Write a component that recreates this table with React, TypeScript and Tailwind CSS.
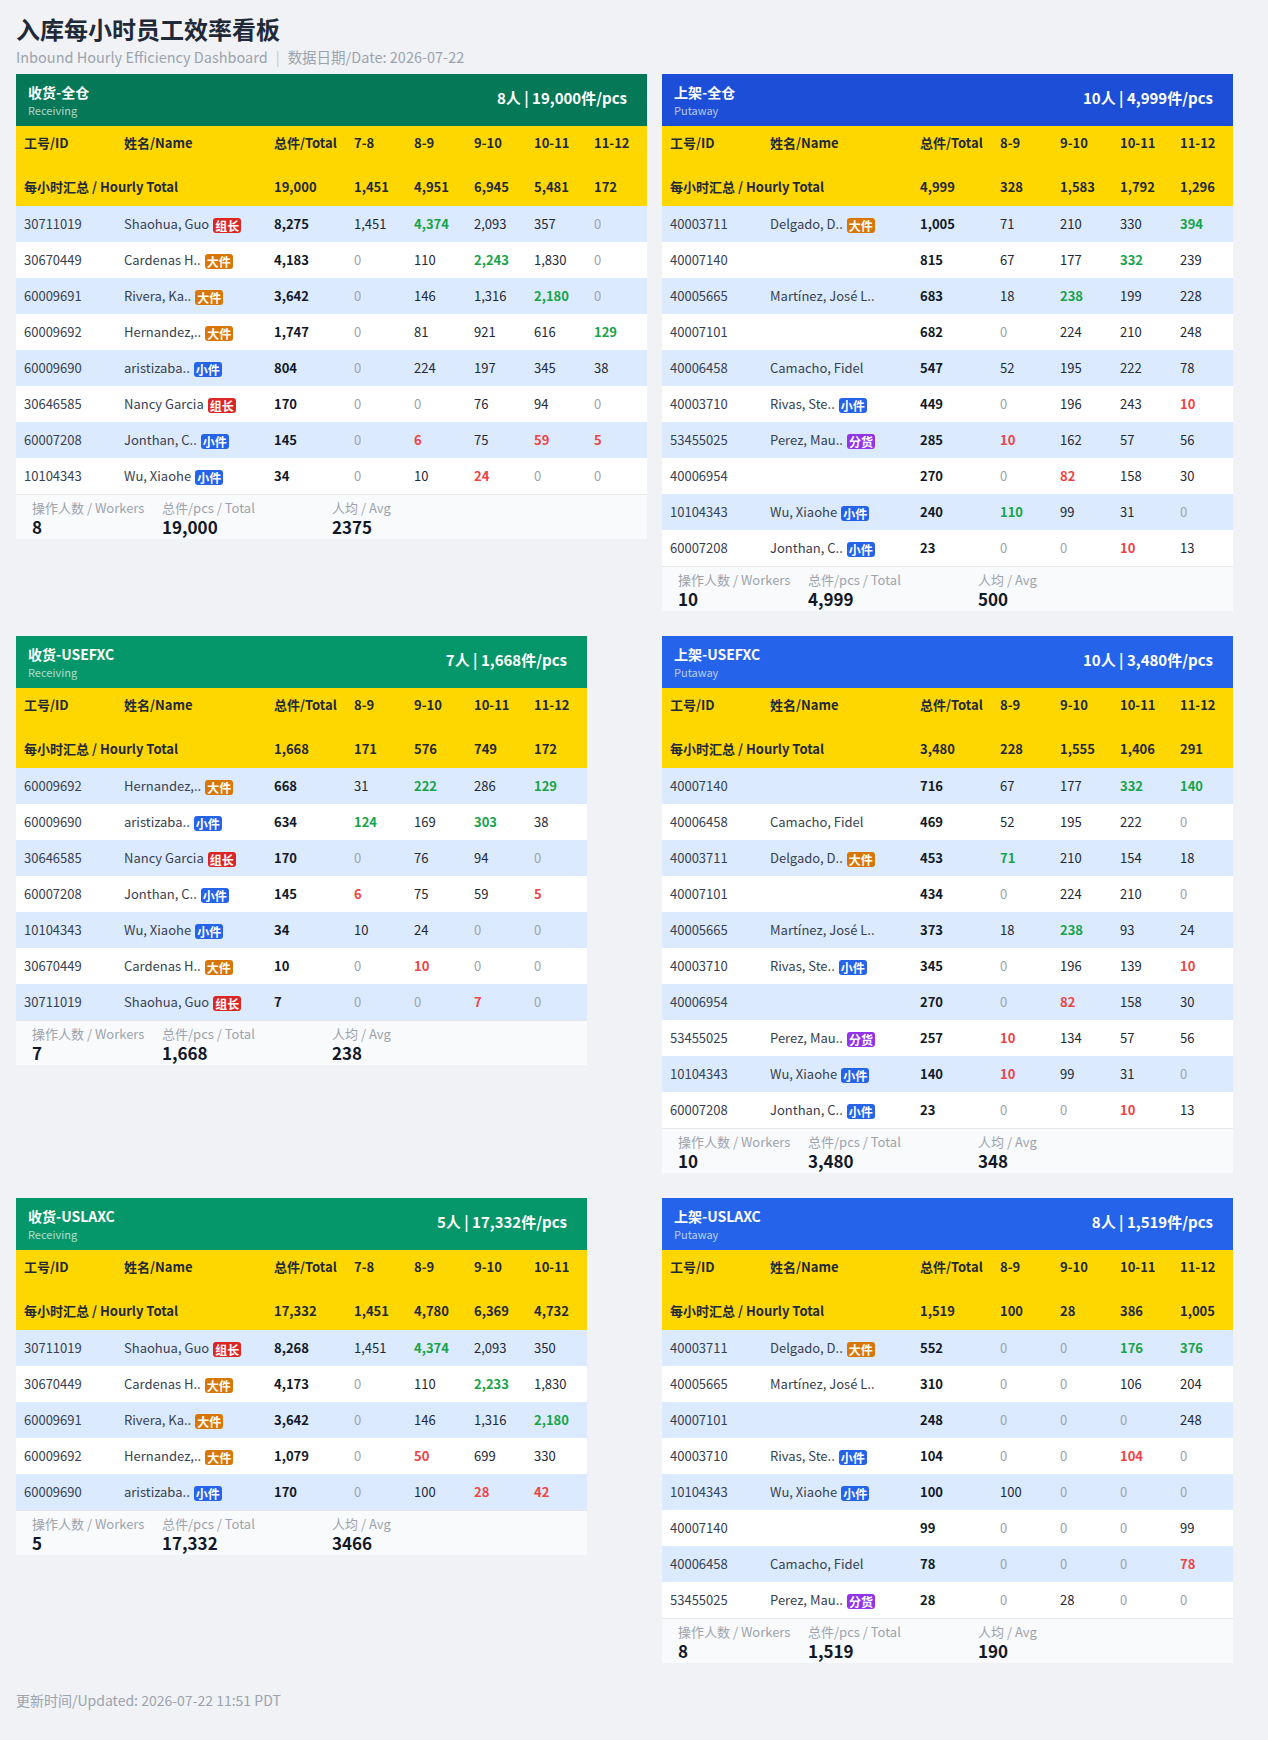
import React from "react";

type Badge = "组长" | "大件" | "小件" | "分货";

interface Row {
  id: string;
  name?: string;
  badge?: Badge;
  total: string;
  hours: string[];
}

interface Panel {
  title: string;
  sub: string;
  headerBg: string;
  summary: string;
  hours: string[];
  totals: string[];
  rows: Row[];
  workers: string;
  total: string;
  avg: string;
}

// hours written as one space-separated string; "g:" = best hour (green), "r:" = low hour (red)
const r = (id: string, name: string, badge: Badge | "", total: string, hours: string): Row => ({
  id,
  name: name || undefined,
  badge: badge || undefined,
  total,
  hours: hours.split(" "),
});

const badgeClass: Record<Badge, string> = {
  组长: "bg-[#dc2626]",
  大件: "bg-[#d97706]",
  小件: "bg-[#2563eb]",
  分货: "bg-[#9333ea]",
};

const panels: Panel[] = [
  {
    title: "收货-全仓",
    sub: "Receiving",
    headerBg: "bg-[#047857]",
    summary: "8人 | 19,000件/pcs",
    hours: ["7-8", "8-9", "9-10", "10-11", "11-12"],
    totals: ["19,000", "1,451", "4,951", "6,945", "5,481", "172"],
    rows: [
      r("30711019", "Shaohua, Guo", "组长", "8,275", "1,451 g:4,374 2,093 357 0"),
      r("30670449", "Cardenas H..", "大件", "4,183", "0 110 g:2,243 1,830 0"),
      r("60009691", "Rivera, Ka..", "大件", "3,642", "0 146 1,316 g:2,180 0"),
      r("60009692", "Hernandez,..", "大件", "1,747", "0 81 921 616 g:129"),
      r("60009690", "aristizaba..", "小件", "804", "0 224 197 345 38"),
      r("30646585", "Nancy Garcia", "组长", "170", "0 0 76 94 0"),
      r("60007208", "Jonthan, C..", "小件", "145", "0 r:6 75 r:59 r:5"),
      r("10104343", "Wu, Xiaohe", "小件", "34", "0 10 r:24 0 0"),
    ],
    workers: "8",
    total: "19,000",
    avg: "2375",
  },
  {
    title: "上架-全仓",
    sub: "Putaway",
    headerBg: "bg-[#1d4ed8]",
    summary: "10人 | 4,999件/pcs",
    hours: ["8-9", "9-10", "10-11", "11-12"],
    totals: ["4,999", "328", "1,583", "1,792", "1,296"],
    rows: [
      r("40003711", "Delgado, D..", "大件", "1,005", "71 210 330 g:394"),
      r("40007140", "", "", "815", "67 177 g:332 239"),
      r("40005665", "Martínez, José L..", "", "683", "18 g:238 199 228"),
      r("40007101", "", "", "682", "0 224 210 248"),
      r("40006458", "Camacho, Fidel", "", "547", "52 195 222 78"),
      r("40003710", "Rivas, Ste..", "小件", "449", "0 196 243 r:10"),
      r("53455025", "Perez, Mau..", "分货", "285", "r:10 162 57 56"),
      r("40006954", "", "", "270", "0 r:82 158 30"),
      r("10104343", "Wu, Xiaohe", "小件", "240", "g:110 99 31 0"),
      r("60007208", "Jonthan, C..", "小件", "23", "0 0 r:10 13"),
    ],
    workers: "10",
    total: "4,999",
    avg: "500",
  },
  {
    title: "收货-USEFXC",
    sub: "Receiving",
    headerBg: "bg-[#059669]",
    summary: "7人 | 1,668件/pcs",
    hours: ["8-9", "9-10", "10-11", "11-12"],
    totals: ["1,668", "171", "576", "749", "172"],
    rows: [
      r("60009692", "Hernandez,..", "大件", "668", "31 g:222 286 g:129"),
      r("60009690", "aristizaba..", "小件", "634", "g:124 169 g:303 38"),
      r("30646585", "Nancy Garcia", "组长", "170", "0 76 94 0"),
      r("60007208", "Jonthan, C..", "小件", "145", "r:6 75 59 r:5"),
      r("10104343", "Wu, Xiaohe", "小件", "34", "10 24 0 0"),
      r("30670449", "Cardenas H..", "大件", "10", "0 r:10 0 0"),
      r("30711019", "Shaohua, Guo", "组长", "7", "0 0 r:7 0"),
    ],
    workers: "7",
    total: "1,668",
    avg: "238",
  },
  {
    title: "上架-USEFXC",
    sub: "Putaway",
    headerBg: "bg-[#2563eb]",
    summary: "10人 | 3,480件/pcs",
    hours: ["8-9", "9-10", "10-11", "11-12"],
    totals: ["3,480", "228", "1,555", "1,406", "291"],
    rows: [
      r("40007140", "", "", "716", "67 177 g:332 g:140"),
      r("40006458", "Camacho, Fidel", "", "469", "52 195 222 0"),
      r("40003711", "Delgado, D..", "大件", "453", "g:71 210 154 18"),
      r("40007101", "", "", "434", "0 224 210 0"),
      r("40005665", "Martínez, José L..", "", "373", "18 g:238 93 24"),
      r("40003710", "Rivas, Ste..", "小件", "345", "0 196 139 r:10"),
      r("40006954", "", "", "270", "0 r:82 158 30"),
      r("53455025", "Perez, Mau..", "分货", "257", "r:10 134 57 56"),
      r("10104343", "Wu, Xiaohe", "小件", "140", "r:10 99 31 0"),
      r("60007208", "Jonthan, C..", "小件", "23", "0 0 r:10 13"),
    ],
    workers: "10",
    total: "3,480",
    avg: "348",
  },
  {
    title: "收货-USLAXC",
    sub: "Receiving",
    headerBg: "bg-[#059669]",
    summary: "5人 | 17,332件/pcs",
    hours: ["7-8", "8-9", "9-10", "10-11"],
    totals: ["17,332", "1,451", "4,780", "6,369", "4,732"],
    rows: [
      r("30711019", "Shaohua, Guo", "组长", "8,268", "1,451 g:4,374 2,093 350"),
      r("30670449", "Cardenas H..", "大件", "4,173", "0 110 g:2,233 1,830"),
      r("60009691", "Rivera, Ka..", "大件", "3,642", "0 146 1,316 g:2,180"),
      r("60009692", "Hernandez,..", "大件", "1,079", "0 r:50 699 330"),
      r("60009690", "aristizaba..", "小件", "170", "0 100 r:28 r:42"),
    ],
    workers: "5",
    total: "17,332",
    avg: "3466",
  },
  {
    title: "上架-USLAXC",
    sub: "Putaway",
    headerBg: "bg-[#2563eb]",
    summary: "8人 | 1,519件/pcs",
    hours: ["8-9", "9-10", "10-11", "11-12"],
    totals: ["1,519", "100", "28", "386", "1,005"],
    rows: [
      r("40003711", "Delgado, D..", "大件", "552", "0 0 g:176 g:376"),
      r("40005665", "Martínez, José L..", "", "310", "0 0 106 204"),
      r("40007101", "", "", "248", "0 0 0 248"),
      r("40003710", "Rivas, Ste..", "小件", "104", "0 0 r:104 0"),
      r("10104343", "Wu, Xiaohe", "小件", "100", "100 0 0 0"),
      r("40007140", "", "", "99", "0 0 0 99"),
      r("40006458", "Camacho, Fidel", "", "78", "0 0 0 r:78"),
      r("53455025", "Perez, Mau..", "分货", "28", "0 28 0 0"),
    ],
    workers: "8",
    total: "1,519",
    avg: "190",
  },
];

function HourCell({ value }: { value: string }) {
  if (value.startsWith("g:"))
    return <td className="px-2 font-semibold text-[#16a34a]">{value.slice(2)}</td>;
  if (value.startsWith("r:"))
    return <td className="px-2 font-semibold text-[#ef4444]">{value.slice(2)}</td>;
  if (value === "0") return <td className="px-2 text-[#9ca3af]">0</td>;
  return <td className="px-2 text-[#1f2937]">{value}</td>;
}

function Stat({ label, value, className }: { label: string; value: string; className?: string }) {
  return (
    <div className={className}>
      <div className="text-[13px] leading-4 text-[#9ca3af]">{label}</div>
      <div className="text-[17px] font-bold leading-[22px] text-[#111827]">{value}</div>
    </div>
  );
}

function Card({ p }: { p: Panel }) {
  const width = 330 + p.hours.length * 60 + 1;
  return (
    <div className="bg-white" style={{ width }}>
      {/* Header band */}
      <div className={`flex h-[52px] items-center justify-between pl-3 pr-5 text-white ${p.headerBg}`}>
        <div className="flex flex-col">
          <span className="text-[14px] font-bold leading-5">{p.title}</span>
          <span className="text-[11px] leading-4 text-white/70">{p.sub}</span>
        </div>
        <span className="mb-1 text-[15px] font-bold">{p.summary}</span>
      </div>

      <table className="w-full table-fixed text-left text-[13px]">
        <colgroup>
          <col className="w-[100px]" />
          <col className="w-[150px]" />
          <col className="w-[80px]" />
          {p.hours.map((h, i) => (
            <col key={h} className={i === p.hours.length - 1 ? "w-[61px]" : "w-[60px]"} />
          ))}
        </colgroup>
        <thead className="bg-[#ffd700] text-[#1f2937]">
          <tr className="h-[33px]">
            <th className="px-2 font-bold">工号/ID</th>
            <th className="px-2 font-bold">姓名/Name</th>
            <th className="whitespace-nowrap px-2 font-bold">总件/Total</th>
            {p.hours.map((h) => (
              <th key={h} className="px-2 font-bold">
                {h}
              </th>
            ))}
          </tr>
          <tr className="h-[47px]">
            <th colSpan={2} className="px-2 pt-2 font-bold">
              每小时汇总 / Hourly Total
            </th>
            {p.totals.map((t, i) => (
              <th key={i} className="px-2 pt-2 font-bold">
                {t}
              </th>
            ))}
          </tr>
        </thead>
        <tbody>
          {p.rows.map((row, i) => (
            <tr key={row.id + i} className={`h-9 ${i % 2 === 0 ? "bg-[#dbeafe]" : "bg-white"}`}>
              <td className="px-2 text-[#374151]">{row.id}</td>
              <td className="whitespace-nowrap px-2 text-[#374151]">
                {row.name}
                {row.badge && (
                  <span
                    className={`ml-1 inline-block rounded-[3px] px-[2px] align-middle text-[12px] font-bold leading-[15px] text-white ${badgeClass[row.badge]}`}
                  >
                    {row.badge}
                  </span>
                )}
              </td>
              <td className="px-2 font-bold text-[#111827]">{row.total}</td>
              {row.hours.map((v, j) => (
                <HourCell key={j} value={v} />
              ))}
            </tr>
          ))}
        </tbody>
      </table>

      {/* Footer stats */}
      <div className="flex border-t border-[#e5e7eb] bg-[#f9fafb] pb-px pl-4 pt-[5px]">
        <Stat className="w-[130px]" label="操作人数 / Workers" value={p.workers} />
        <Stat className="w-[170px]" label="总件/pcs / Total" value={p.total} />
        <Stat label="人均 / Avg" value={p.avg} />
      </div>
    </div>
  );
}

export default function App() {
  return (
    <div className="min-h-screen bg-[#f0f2f5] p-4 font-['Noto_Sans_CJK_SC','Noto_Sans',sans-serif]">
      <h1 className="text-[24px] font-bold leading-[26px] text-[#1f2937]">入库每小时员工效率看板</h1>
      <div className="mb-[2px] text-[14.5px] leading-[30px] text-[#9ca3af]">
        Inbound Hourly Efficiency Dashboard
        <span className="mx-2 text-[#c4c8ce]">|</span>
        数据日期/Date: 2026-07-22
      </div>

      <div className="grid grid-cols-[auto_auto] items-start justify-start justify-items-start gap-x-[15px] gap-y-[25px]">
        {panels.map((p) => (
          <Card key={p.title} p={p} />
        ))}
      </div>

      <div className="mt-[27px] text-[14px] leading-5 text-[#9ca3af]">
        更新时间/Updated: 2026-07-22 11:51 PDT
      </div>
    </div>
  );
}
